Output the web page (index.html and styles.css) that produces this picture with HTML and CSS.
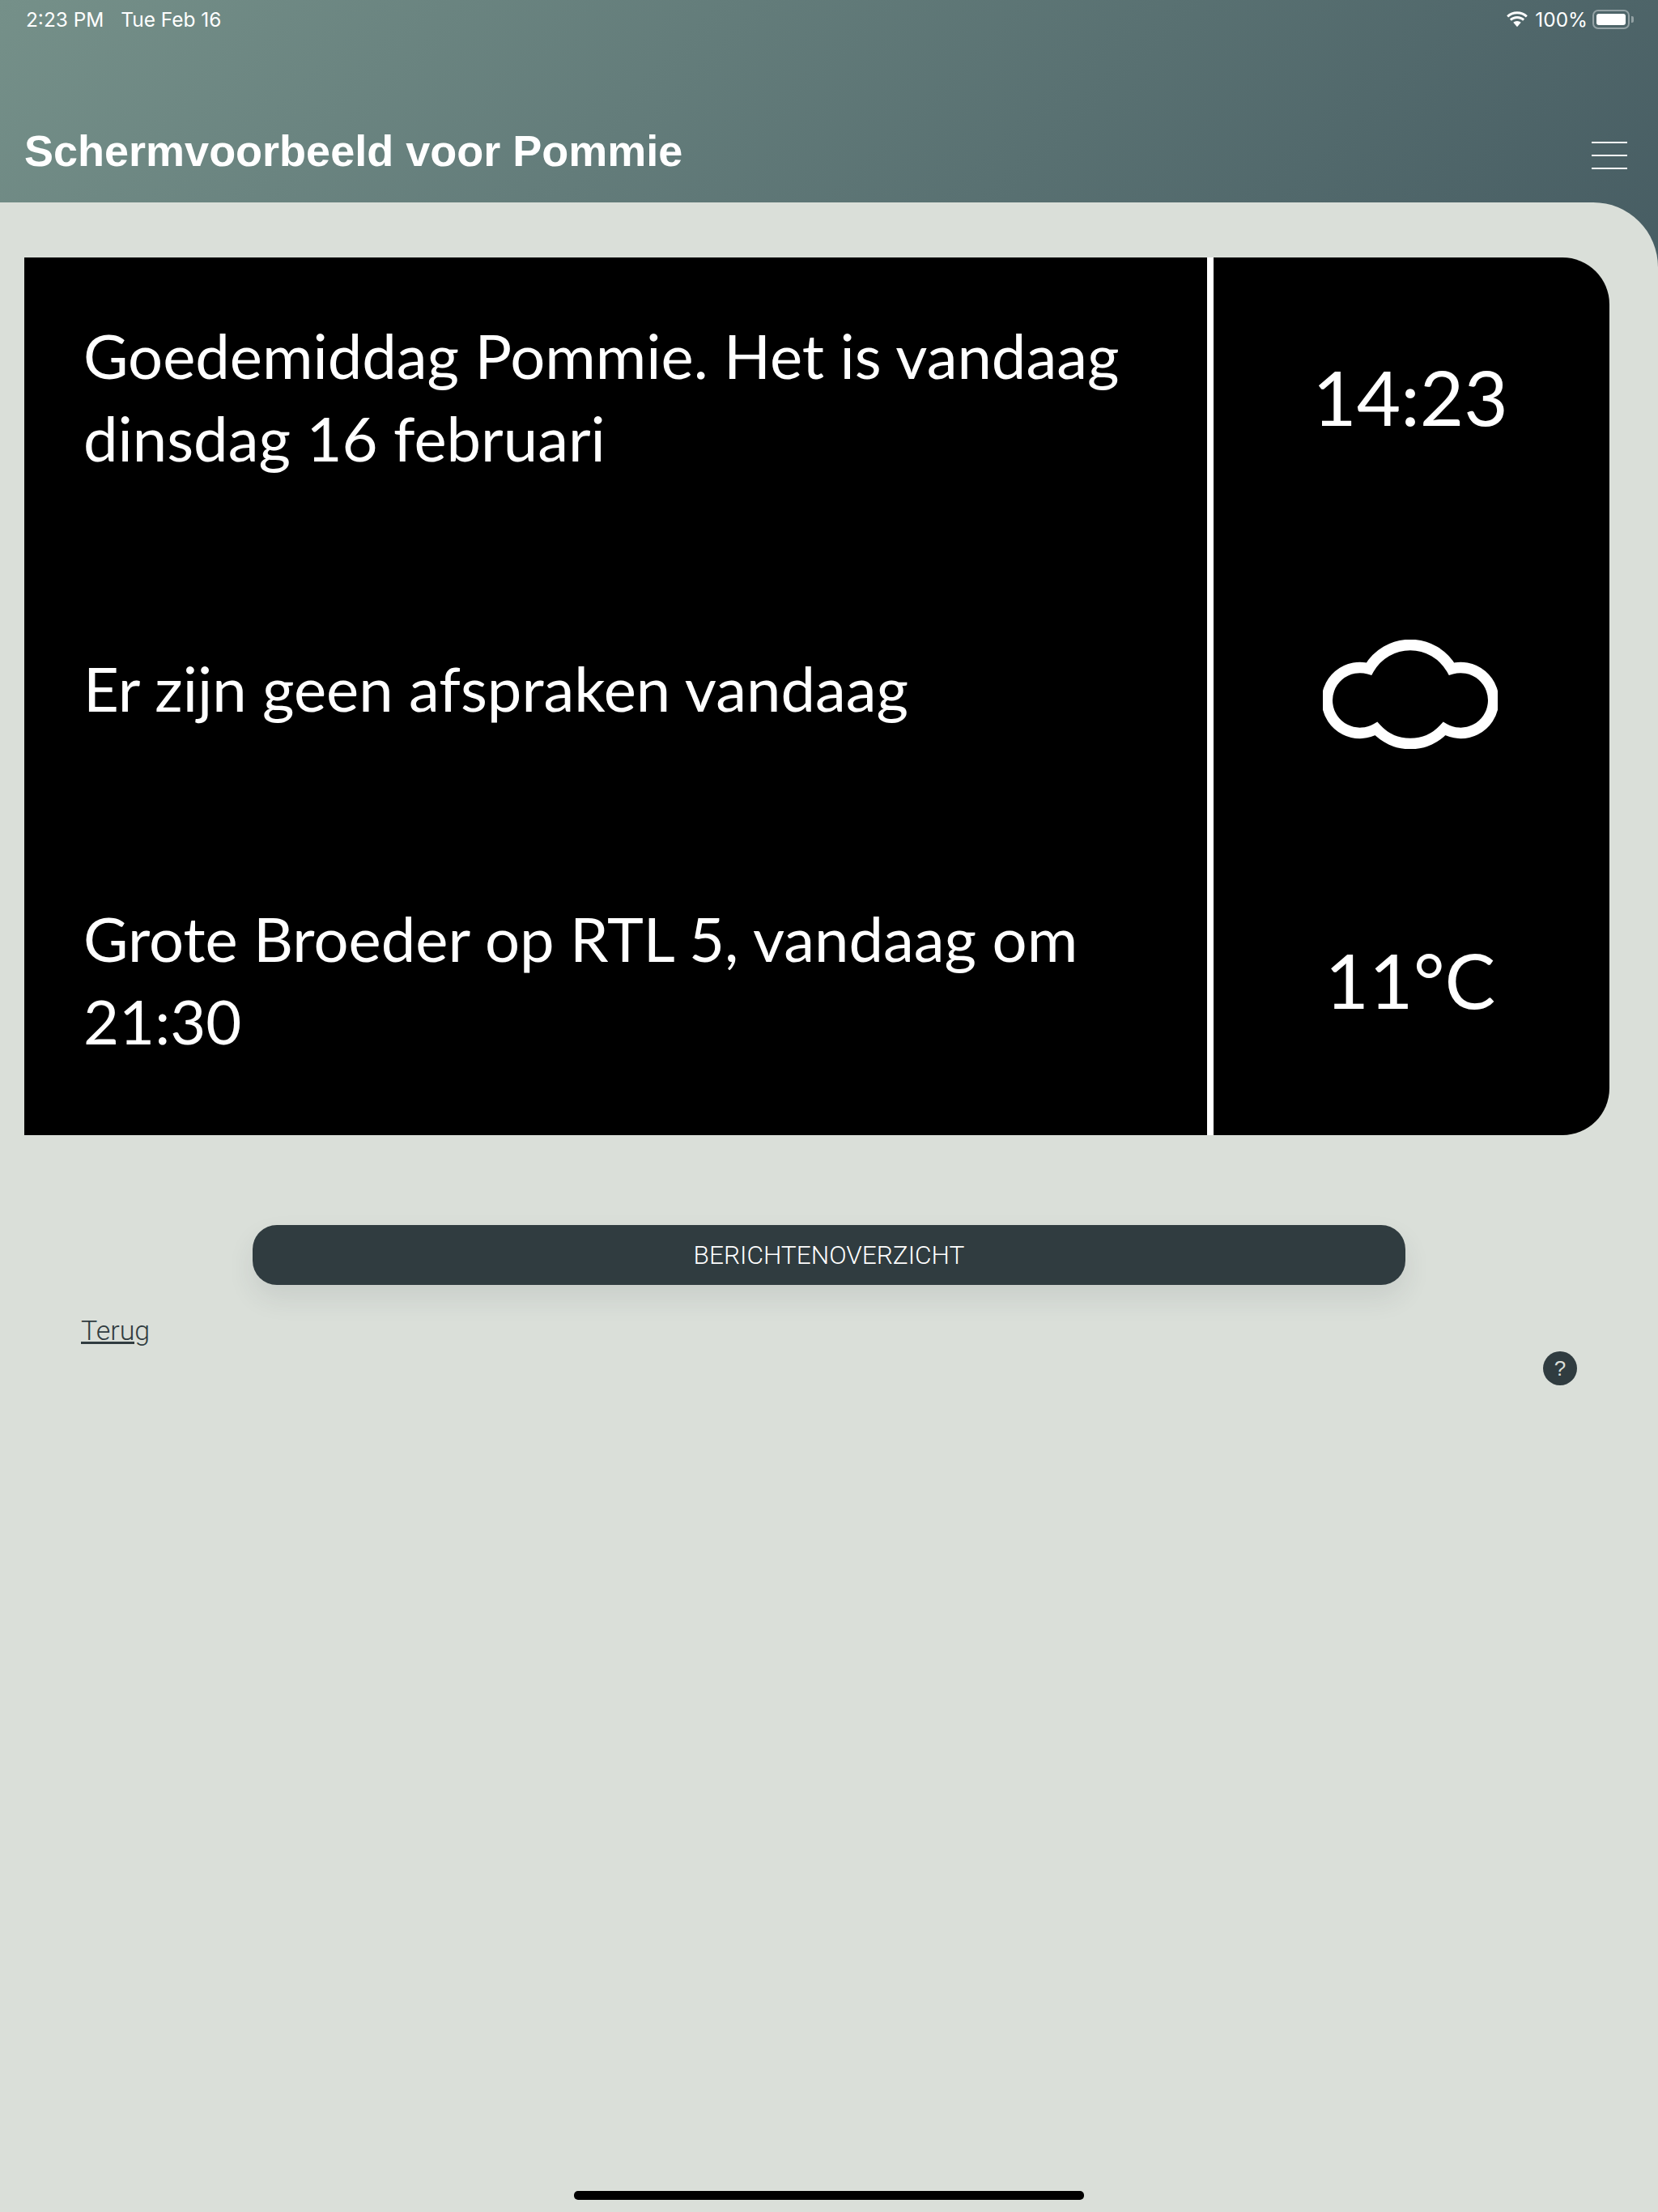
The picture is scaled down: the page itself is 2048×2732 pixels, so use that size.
FILE: index.html
```html
<!DOCTYPE html>
<html lang="en">
<head>
  <meta charset="UTF-8">
  <meta name="viewport" content="width=device-width, initial-scale=1.0">
  <title>Schermvoorbeeld voor Pommie</title>
  <link rel="stylesheet" href="styles.css">
</head>
<body>
  <div class="app">
    <div class="status-bar">
      <div class="status-left">
        <span>2:23 PM</span>
        <span>Tue Feb 16</span>
      </div>
      <div class="status-right">
        <svg class="wifi" width="28" height="20" viewBox="0 0 28 20">
          <path d="M14 3.2c4.2 0 8 1.6 10.9 4.2l1.9-2.1C23.4 2.100 18.900 0.300 14 0.300S4.600 2.100 1.200 5.300l1.900 2.100C6 4.800 9.800 3.200 14 3.200z" fill="#fff"/>
          <path d="M14 9c2.700 0 5.200 1 7.100 2.700l2-2.100C20.700 7.400 17.500 6.100 14 6.100S7.300 7.400 4.900 9.600l2 2.100C8.800 10 11.300 9 14 9z" fill="#fff"/>
          <path d="M14 12c-1.800 0-3.400.7-4.700 1.800L14 19.200l4.700-5.400C17.400 12.700 15.800 12 14 12z" fill="#fff"/>
        </svg>
        <span>100%</span>
        <div class="battery"><div class="battery-fill"></div></div>
        <div class="battery-nub"></div>
      </div>
    </div>

    <header class="title-bar">
      <h1>Schermvoorbeeld voor Pommie</h1>
      <div class="menu-icon"><span></span><span></span><span></span></div>
    </header>

    <main class="content">
      <section class="screen">
        <div class="messages">
          <p>Goedemiddag Pommie. Het is vandaag dinsdag 16 februari</p>
          <p>Er zijn geen afspraken vandaag</p>
          <p>Grote Broeder op RTL 5, vandaag om 21:30</p>
        </div>
        <div class="info">
          <p>14:23</p>
          <svg class="cloud" width="216" height="135" viewBox="0 0 216 135">
            <path d="M57 36A58.800 58.800 0 0 1 159 36A40.500 40.500 0 1 1 150 110A56.800 56.800 0 0 1 66 110A40.500 40.500 0 1 1 57 36Z" fill="none" stroke="#fff" stroke-width="13.500"/>
          </svg>
          <p>11°C</p>
        </div>
      </section>

      <div class="actions">
        <button class="overview-btn">BERICHTENOVERZICHT</button>
      </div>
      <div class="links">
        <a href="#" class="back-link">Terug</a>
        <span class="help">?</span>
      </div>
    </main>
    <div class="home-bar"></div>
  </div>
</body>
</html>
```

FILE: styles.css
```css
body {
  margin: 0;
  font-family: "Liberation Sans", sans-serif;
  background: #dadfd9;
}
.app {
  position: relative;
  height: 2732px;
  overflow: hidden;
  background: linear-gradient(135deg, #759089 0%, #475d63 100%) top / 100% 330px no-repeat;
}

/* status bar */
.status-bar {
  display: flex;
  justify-content: space-between;
  align-items: center;
  height: 48px;
  padding: 0 30px 0 32px;
  color: #fff;
  font-family: Inter, sans-serif;
  font-size: 24.4px;
}
.status-left {
  display: flex;
  gap: 21px;
}
.status-right {
  display: flex;
  align-items: center;
}
.status-right span {
  margin: 0 6px 0 8px;
}
.battery {
  box-sizing: border-box;
  width: 46px;
  height: 24px;
  padding: 3px;
  border: 2px solid rgba(255, 255, 255, 0.4);
  border-radius: 7px;
}
.battery-fill {
  height: 100%;
  background: #fff;
  border-radius: 3px;
}
.battery-nub {
  width: 3px;
  height: 8px;
  margin-left: 2px;
  background: rgba(255, 255, 255, 0.4);
  border-radius: 0 2px 2px 0;
}

/* title */
.title-bar {
  display: flex;
  justify-content: space-between;
  align-items: center;
  box-sizing: border-box;
  height: 202px;
  padding: 90px 38px 0 30px;
  color: #fff;
}
.title-bar h1 {
  margin: 0 0 16px;
  font-size: 54px;
  font-weight: 700;
}
.menu-icon {
  display: flex;
  flex-direction: column;
  gap: 14px;
  margin-bottom: 4px;
}
.menu-icon span {
  width: 44px;
  height: 2px;
  background: #fff;
}

/* main */
.content {
  height: 2482px;
  padding-top: 68px;
  box-sizing: border-box;
  background: #dadfd9;
  border-top-right-radius: 80px;
}
.screen {
  display: flex;
  height: 1084px;
  margin: 0 60px 0 30px;
  background: #000;
  color: #fff;
  border-radius: 0 58px 58px 0;
  font-family: Lato, sans-serif;
}
.messages {
  display: grid;
  grid-template-rows: repeat(3, 360px);
  align-items: center;
  box-sizing: border-box;
  width: 1469px;
  padding: 0 40px 0 73px;
  border-right: 8px solid #fff;
}
.messages p {
  margin: 0;
  padding-bottom: 16px;
  font-size: 76px;
  line-height: 102px;
}
.info {
  flex: 1;
  display: grid;
  grid-template-rows: repeat(3, 360px);
  align-items: center;
  justify-items: center;
  padding-right: 3px;
}
.info p {
  margin: 0;
  padding-bottom: 18px;
  font-size: 94px;
}
.cloud {
  margin-bottom: 2px;
}

.actions {
  display: flex;
  justify-content: center;
  margin-top: 111px;
}
.overview-btn {
  width: 1424px;
  height: 74px;
  border: 0;
  border-radius: 30px;
  background: #303c40;
  color: #fff;
  font-family: Roboto, sans-serif;
  font-weight: 300;
  font-size: 31.6px;
  box-shadow: 0 16px 32px rgba(48, 60, 64, 0.1);
}
.links {
  display: flex;
  justify-content: space-between;
  padding: 36px 100px 0 100px;
}
.back-link {
  color: #303c40;
  font-family: Roboto, sans-serif;
  font-weight: 300;
  font-size: 34px;
}
.help {
  display: flex;
  align-items: center;
  justify-content: center;
  width: 42px;
  height: 42px;
  margin-top: 46px;
  border-radius: 50%;
  background: #303c40;
  color: #dadfd9;
  font-size: 26px;
}
.home-bar {
  position: absolute;
  left: 709px;
  bottom: 15px;
  width: 630px;
  height: 11px;
  border-radius: 5px;
  background: #000;
}
```
